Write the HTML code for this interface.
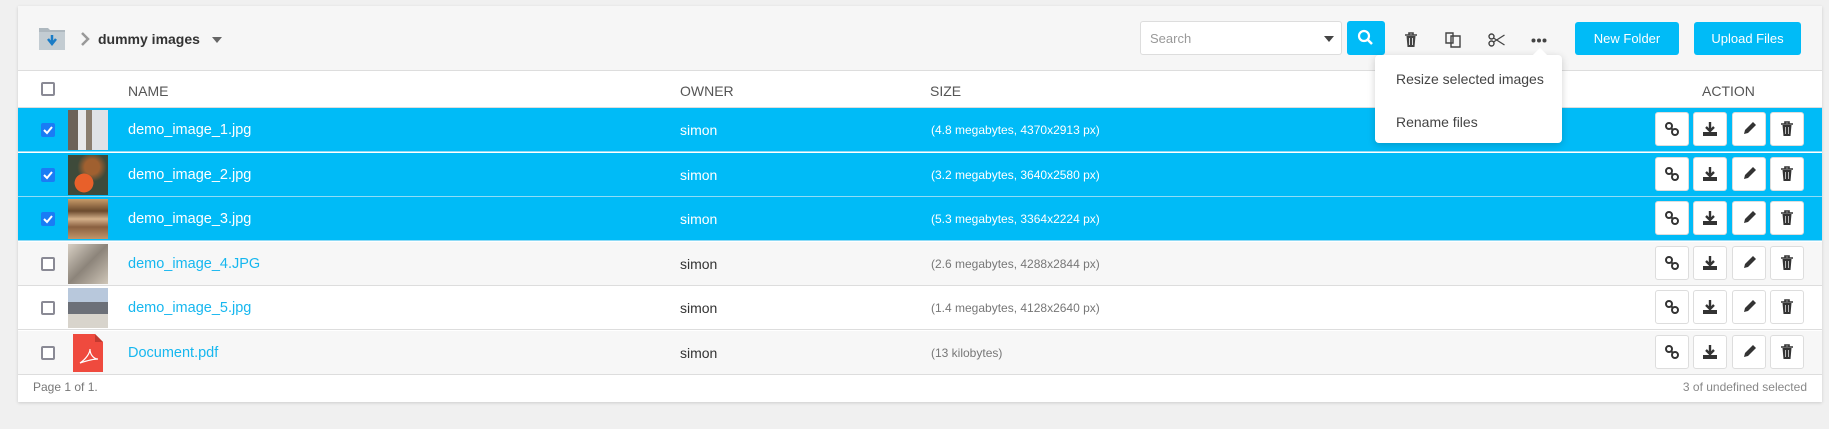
<!DOCTYPE html><html><head><style>
*{box-sizing:border-box;margin:0;padding:0}
body{width:1829px;height:429px;background:#f0f0f0;font-family:"Liberation Sans",sans-serif;position:relative;overflow:hidden}
.panel{position:absolute;left:18px;top:6px;width:1804px;height:396px;background:#fff;box-shadow:0 1px 3px rgba(0,0,0,.15)}
.hdr{position:absolute;left:0;top:0;width:100%;height:65px;background:#f6f6f6;border-bottom:1px solid #ddd}
.abs{position:absolute}
.row{position:absolute;left:0;width:100%;height:44px;border-bottom:1px solid #ddd}
.sel{background:#00bbf7;border-bottom:1px solid #8fdcf7}
.cb{position:absolute;left:23px;top:15px;width:14px;height:14px;border:2px solid #8a8a95;border-radius:2px;background:#fff}
.cbc{border:none;background:#1a7cf5;border-radius:2px}
.thumb{position:absolute;left:50px;top:2px;width:40px;height:40px}
.nm{position:absolute;left:110px;top:14px;font-size:14.5px;color:#16b7ef}
.sel .nm,.sel .ow,.sel .sz{color:#fff}
.ow{position:absolute;left:662px;top:14px;font-size:14px;color:#333}
.sz{position:absolute;left:913px;top:15px;font-size:12px;color:#777}
.btn{position:absolute;top:4px;width:34px;height:34px;background:#fff;border:1px solid #ddd;border-radius:3px;display:flex;align-items:center;justify-content:center}
</style></head><body>
<div class="panel">
<div class="hdr">
<svg class="abs" style="left:20px;top:19px" width="28" height="26" viewBox="0 0 28 26"><path d="M1 3h9l2 2h15v20H1z" fill="#aeb8bf"/><path d="M1 7h26v18H1z" fill="#c3ccd2"/><path d="M14 10v8M10 14l4 5 4-5" stroke="#1a7cc6" stroke-width="2.5" fill="none"/></svg>
<svg class="abs" style="left:62px;top:26px" width="10" height="14"><path d="M2 1l6 6-6 6" stroke="#999" stroke-width="2.5" fill="none"/></svg>
<div class="abs" style="left:80px;top:25px;font-size:14px;font-weight:bold;color:#333">dummy images</div>
<svg class="abs" style="left:194px;top:31px" width="10" height="6"><path d="M0 0h10L5 6z" fill="#666"/></svg>
<div class="abs" style="left:1122px;top:15px;width:202px;height:34px;background:#fff;border:1px solid #ddd;border-radius:3px;font-size:13px;color:#999;padding:9px 9px">Search</div>
<svg class="abs" style="left:1306px;top:30px" width="10" height="6"><path d="M0 0h10L5 6z" fill="#444"/></svg>
<div class="abs" style="left:1329px;top:15px;width:38px;height:34px;background:#00bbf7;border-radius:3px"></div>
<svg class="abs" style="left:1339px;top:23px" width="18" height="18"><circle cx="7" cy="7" r="5" stroke="#fff" stroke-width="2.2" fill="none"/><path d="M11 11l4 4" stroke="#fff" stroke-width="2.5"/></svg>
<svg class="abs" style="left:1386px;top:26px" width="14" height="16"><path d="M1 3h12M5 3V1h4v2" stroke="#444" stroke-width="1.6" fill="none"/><path d="M2.5 4h9l-1 11h-7z" fill="#444"/><path d="M5.5 6v7M8.5 6v7" stroke="#ddd"/></svg>
<svg class="abs" style="left:1427px;top:24px" width="18" height="19"><path d="M1 3h7v10H1zM6 6h9v11H6z" stroke="#444" stroke-width="1.4" fill="#f6f6f6"/></svg>
<svg class="abs" style="left:1470px;top:27px" width="18" height="14"><circle cx="3.5" cy="3.5" r="2.5" stroke="#444" fill="none" stroke-width="1.4"/><circle cx="3.5" cy="10.5" r="2.5" stroke="#444" fill="none" stroke-width="1.4"/><path d="M5.5 5l11 7M5.5 9l11-7" stroke="#444" stroke-width="1.3"/></svg>
<svg class="abs" style="left:1513px;top:32px" width="16" height="5"><circle cx="2.5" cy="2.5" r="2" fill="#444"/><circle cx="8" cy="2.5" r="2" fill="#444"/><circle cx="13.5" cy="2.5" r="2" fill="#444"/></svg>
<div class="abs" style="left:1557px;top:16px;width:104px;height:33px;background:#00bbf7;border-radius:3px;color:#fff;font-size:13px;text-align:center;line-height:33px">New Folder</div>
<div class="abs" style="left:1676px;top:16px;width:107px;height:33px;background:#00bbf7;border-radius:3px;color:#fff;font-size:13px;text-align:center;line-height:33px">Upload Files</div>
</div>
<div class="row" style="top:65px;height:37px"><div class="cb" style="top:11px"></div>
<div class="abs" style="left:110px;top:12px;font-size:14px;color:#555">NAME</div>
<div class="abs" style="left:662px;top:12px;font-size:14px;color:#555">OWNER</div>
<div class="abs" style="left:912px;top:12px;font-size:14px;color:#555">SIZE</div>
<div class="abs" style="left:1684px;top:12px;font-size:14px;color:#555">ACTION</div></div>
<div id="rows"></div>
<div class="abs" style="left:15px;top:374px;font-size:12px;color:#777">Page 1 of 1.</div>
<div class="abs" style="right:15px;top:374px;font-size:12px;color:#888">3 of undefined selected</div>
<div class="abs" style="left:1357px;top:49px;width:187px;height:88px;background:#fff;border-radius:4px;box-shadow:0 2px 8px rgba(0,0,0,.18)">
<div class="abs" style="left:160px;top:-5px;width:10px;height:10px;background:#fff;transform:rotate(45deg)"></div>
<div class="abs" style="left:21px;top:16px;font-size:14px;color:#444">Resize selected images</div>
<div class="abs" style="left:21px;top:59px;font-size:14px;color:#444">Rename files</div></div>
</div>
<script>
var R=[["demo_image_1.jpg","(4.8 megabytes, 4370x2913 px)",1,"linear-gradient(90deg,#6d6258 0 25%,#e8e8ea 25% 45%,#8a7d6e 45% 60%,#dfe2e6 60%)"],
["demo_image_2.jpg","(3.2 megabytes, 3640x2580 px)",1,"radial-gradient(circle at 40% 70%,#e8602a 0 25%,transparent 26%),radial-gradient(circle at 60% 30%,#a06030 0 20%,#3e4a3a 40%)"],
["demo_image_3.jpg","(5.3 megabytes, 3364x2224 px)",1,"linear-gradient(#c89b6a,#6b4a2e 30%,#d4b08a 50%,#8a6040 70%,#c0956a)"],
["demo_image_4.JPG","(2.6 megabytes, 4288x2844 px)",0,"linear-gradient(135deg,#d8d0c4,#8c847a 50%,#cfc6b8)"],
["demo_image_5.jpg","(1.4 megabytes, 4128x2640 px)",0,"linear-gradient(#b8c8dc 0 35%,#6c7078 35% 65%,#d8d4cc 65%)"],
["Document.pdf","(13 kilobytes)",0,""]];
var h="",ic=['<svg width="16" height="16"><circle cx="5" cy="5" r="3" stroke="#333" stroke-width="2" fill="none"/><circle cx="11" cy="11" r="3" stroke="#333" stroke-width="2" fill="none"/><path d="M7 7l2 2" stroke="#333" stroke-width="2"/></svg>',
'<svg width="16" height="16"><path d="M8 1v8M4 6l4 4 4-4" stroke="#333" stroke-width="2.4" fill="none"/><path d="M1 11h14v4H1z" fill="#333"/></svg>',
'<svg width="16" height="16"><path d="M3 13l1-4 8-8 3 3-8 8z" fill="#333"/></svg>',
'<svg width="14" height="16"><path d="M1 3h12M5 3V1h4v2" stroke="#333" stroke-width="1.6" fill="none"/><path d="M2.5 4h9l-1 11h-7z" fill="#333"/><path d="M5.5 6v7M8.5 6v7" stroke="#bbb"/></svg>'];
R.forEach(function(r,i){var t=102+i*44.5;var bg=r[2]?'':(i%2?'background:#f7f7f7':'background:#fff');
h+='<div class="row '+(r[2]?'sel':'')+'" style="top:'+t+'px;'+bg+'">';
h+='<div class="cb '+(r[2]?'cbc':'')+'">'+(r[2]?'<svg width="14" height="14"><path d="M3 7l3 3 5-6" stroke="#fff" stroke-width="2" fill="none"/></svg>':'')+'</div>';
if(r[3])h+='<div class="thumb" style="background:'+r[3]+'"></div>';else h+='<svg class="thumb" viewBox="0 0 40 40"><path d="M5 1h22l8 8v30H5z" fill="#ef4a3e"/><path d="M27 1v8h8" fill="#c23a30"/><path d="M12 30c6-4 10-10 10-14 0 6 4 10 8 10-6 0-12 2-18 4z" stroke="#fff" stroke-width="1.2" fill="none"/></svg>';
h+='<div class="nm">'+r[0]+'</div><div class="ow">simon</div><div class="sz">'+r[1]+'</div>';
[1637,1675,1714,1752].forEach(function(x,k){h+='<div class="btn" style="left:'+x+'px">'+ic[k]+'</div>'});
h+='</div>'});
document.getElementById('rows').innerHTML=h;
</script>
</body></html>
